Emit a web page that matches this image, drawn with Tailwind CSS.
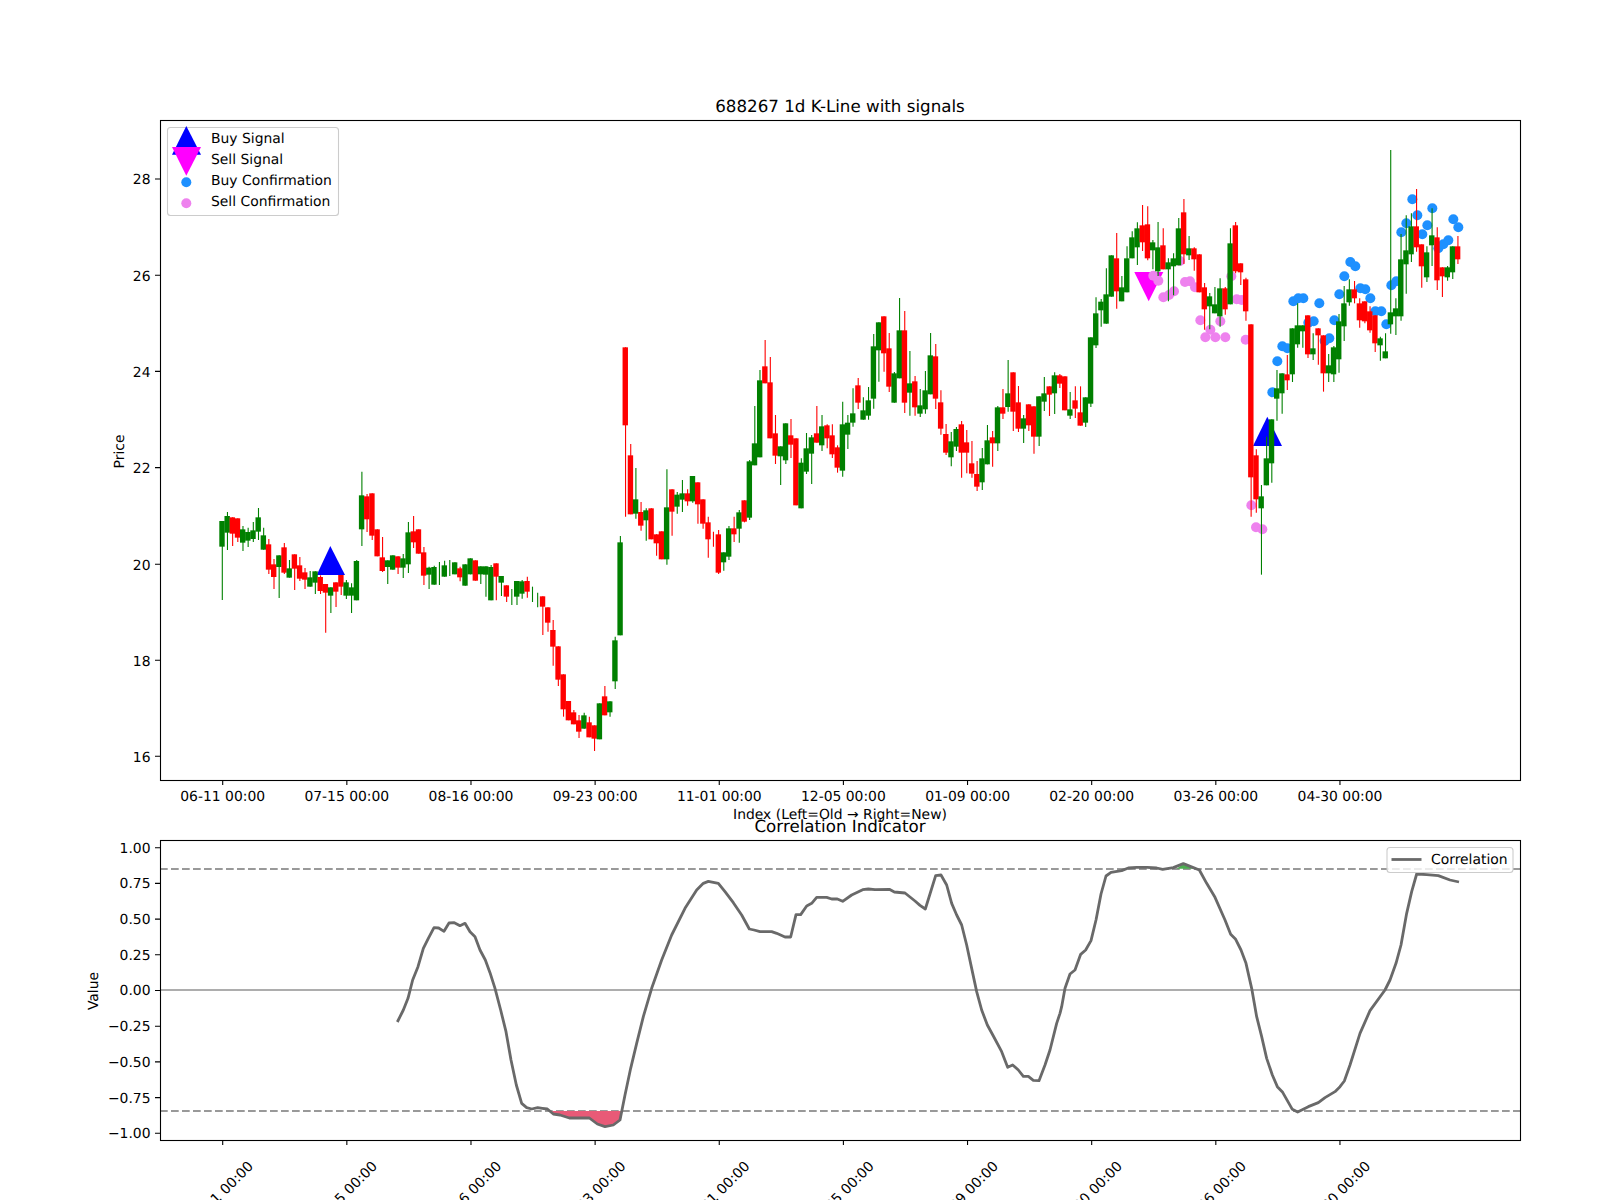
<!DOCTYPE html>
<html>
<head>
    <title>688267 1d K-Line with signals</title>
    <script src="https://cdn.jsdelivr.net/npm/@tailwindcss/browser@4"></script>
</head>
<body class="bg-white m-0 p-0">
    <div class="w-[1600px] h-[1200px] overflow-hidden bg-white">
        <svg id="chart" width="1600" height="1200" viewBox="0 0 1600 1200" class="block font-['DejaVu_Sans',sans-serif] text-[13.9px] fill-black [text-rendering:geometricPrecision]">

            <!-- Price panel -->
            <g id="markers"></g>
            <g id="candles"></g>
            <rect x="160.5" y="120.5" width="1360" height="660" fill="none" stroke="#000" stroke-width="1.1"></rect>
            <text x="840" y="112" text-anchor="middle" class="text-[16.7px]">688267 1d K-Line with signals</text>
            <text x="840" y="819" text-anchor="middle">Index (Left=Old → Right=New)</text>
            <text transform="translate(124 451.5) rotate(-90)" text-anchor="middle">Price</text>

            <g text-anchor="end">
                <text x="150.5" y="184">28</text>
                <text x="150.5" y="281">26</text>
                <text x="150.5" y="377">24</text>
                <text x="150.5" y="473">22</text>
                <text x="150.5" y="570">20</text>
                <text x="150.5" y="666">18</text>
                <text x="150.5" y="762">16</text>
            </g>
            <g text-anchor="middle">
                <text x="222.7" y="801">06-11 00:00</text>
                <text x="346.8" y="801">07-15 00:00</text>
                <text x="471" y="801">08-16 00:00</text>
                <text x="595.1" y="801">09-23 00:00</text>
                <text x="719.3" y="801">11-01 00:00</text>
                <text x="843.4" y="801">12-05 00:00</text>
                <text x="967.6" y="801">01-09 00:00</text>
                <text x="1091.7" y="801">02-20 00:00</text>
                <text x="1215.8" y="801">03-26 00:00</text>
                <text x="1340" y="801">04-30 00:00</text>
            </g>

            <!-- Price legend -->
            <rect x="167.5" y="127.5" width="171" height="88" rx="3" fill="#fff" fill-opacity="0.8" stroke="#ccc" stroke-width="1.1"></rect>
            <polygon points="186.3,126 201,154.7 172,154.7" fill="#0000ff"></polygon>
            <polygon points="172,147 201,147 186.3,175.7" fill="#ff00ff"></polygon>
            <circle cx="186.3" cy="182.3" r="5" fill="#1e90ff"></circle>
            <circle cx="186.3" cy="203.3" r="5" fill="#ee82ee"></circle>
            <text x="211" y="143.3">Buy Signal</text>
            <text x="211" y="164.3">Sell Signal</text>
            <text x="211" y="185.3">Buy Confirmation</text>
            <text x="211" y="206.3">Sell Confirmation</text>

            <!-- Correlation panel -->
            <line x1="160" x2="1520" y1="869" y2="869" stroke="#999999" stroke-width="2" stroke-dasharray="7.7 3.3"></line>
            <line x1="160" x2="1520" y1="1111" y2="1111" stroke="#999999" stroke-width="2" stroke-dasharray="7.7 3.3"></line>
            <line x1="160" x2="1520" y1="990" y2="990" stroke="#adadad" stroke-width="2"></line>
            <polygon id="corr-fill-low" fill="#e85a77"></polygon>
            <polygon id="corr-fill-high" fill="#4caf50"></polygon>
            <polyline id="corr-line" fill="none" stroke="#696969" stroke-width="2.8" stroke-linejoin="round"></polyline>
            <rect x="160.5" y="840.5" width="1360" height="300" fill="none" stroke="#000" stroke-width="1.1"></rect>
            <text x="840" y="832" text-anchor="middle" class="text-[16.7px]">Correlation Indicator</text>
            <text transform="translate(98 991) rotate(-90)" text-anchor="middle">Value</text>

            <g text-anchor="end">
                <text x="150.5" y="852.6">1.00</text>
                <text x="150.5" y="888.3">0.75</text>
                <text x="150.5" y="924">0.50</text>
                <text x="150.5" y="959.7">0.25</text>
                <text x="150.5" y="995.4">0.00</text>
                <text x="150.5" y="1031">−0.25</text>
                <text x="150.5" y="1066.7">−0.50</text>
                <text x="150.5" y="1103">−0.75</text>
                <text x="150.5" y="1138">−1.00</text>
            </g>
            <g text-anchor="middle">
                <text transform="translate(224 1197) rotate(-45)">06-11 00:00</text>
                <text transform="translate(348.1 1197) rotate(-45)">07-15 00:00</text>
                <text transform="translate(472.3 1197) rotate(-45)">08-16 00:00</text>
                <text transform="translate(596.4 1197) rotate(-45)">09-23 00:00</text>
                <text transform="translate(720.6 1197) rotate(-45)">11-01 00:00</text>
                <text transform="translate(844.7 1197) rotate(-45)">12-05 00:00</text>
                <text transform="translate(968.9 1197) rotate(-45)">01-09 00:00</text>
                <text transform="translate(1093 1197) rotate(-45)">02-20 00:00</text>
                <text transform="translate(1217.1 1197) rotate(-45)">03-26 00:00</text>
                <text transform="translate(1341.3 1197) rotate(-45)">04-30 00:00</text>
            </g>

            <!-- Correlation legend -->
            <rect x="1387" y="847.5" width="126" height="25" rx="3" fill="#fff" fill-opacity="0.8" stroke="#ccc" stroke-width="1.1"></rect>
            <line x1="1391.5" x2="1421.5" y1="859.5" y2="859.5" stroke="#696969" stroke-width="2.8"></line>
            <text x="1431" y="864.3">Correlation</text>

            <path id="ticks" fill="none" stroke="#000" stroke-width="1.1"></path>
        </svg>
    </div>

    <script>
        const NS = 'http://www.w3.org/2000/svg';
        const G = '#008000', R = '#ff0000';
        const X0 = 222, STEP = 5.17;

        function add(parent, tag, attrs) {
            const el = document.createElementNS(NS, tag);
            for (const k in attrs) el.setAttribute(k, attrs[k]);
            parent.appendChild(el);
            return el;
        }

        // Candles read off 3x crops: colour, body top, body bottom, wick top, wick bottom.
        // Each block keeps the y origin of its crop. Null body = wick only.
        const blocks = [
            [420, [
                [G,303,380,303,540],[G,288,338,276,390],[R,292,341,292,378],[R,295,353,295,366],[G,328,368,318,393],
                [G,336,362,323,381],[G,331,357,306,366],[G,292,335,264,360],[G,346,389,323,389],[R,373,449,357,462],
                [R,433,471,417,507],[G,406,441,406,534],[R,382,458,369,462],[G,445,473,420,473],[R,403,446,403,510],
                [R,436,476,411,483],[R,457,479,444,507],[G,472,500,453,500],[G,454,488,454,522],[R,471,513,466,522],
                [R,492,518,492,638],[G,502,527,502,579],[R,487,515,487,561],[R,465,500,465,525],[G,487,527,480,537],
                [G,502,527,490,579],[G,423,541,420,541],[G,226,328,155,378],[R,229,298,222,336],[R,220,347,220,360],
                [R,328,409,328,409],[R,412,453,351,456],[G,421,441,421,492],[G,406,449,406,449],[R,409,443,409,462],
                [G,415,443,402,474],[G,337,433,306,459],[R,334,367,288,384],[R,328,401,328,401],[R,397,467,381,495],
                [G,443,464,440,507],[G,441,494,437,494],[G,null,null,426,495],[G,436,470,422,470],[G,null,null,420,468],
                [G,427,463,427,463],[R,445,472,440,484],[G,433,497,433,497],[G,415,463,415,463],[R,421,482,421,482],
                [G,439,463,439,492],[G,439,464,439,530],[G,441,541,435,541],[R,430,470,430,541]
            ]],
            [320, [
                [G,768,788,768,828],[R,796,830,796,846],[G,null,null,807,855],[G,783,830,783,855],[G,784,821,780,836],
                [R,783,815,770,833],[G,null,null,800,846],[G,null,null,818,862],[R,829,860,829,945],[R,862,908,862,935],
                [R,930,980,900,1037],[R,979,1079,979,1098],[R,1063,1168,1063,1190],[R,1143,1201,1143,1201],[R,1177,1213,1170,1213],
                [R,1201,1235,1185,1254],[G,1186,1226,1178,1226],[R,1207,1252,1190,1252],[R,1216,1256,1216,1293],[G,1150,1258,1150,1258],
                [R,1129,1186,1098,1186],[G,1144,1177,1144,1190],[G,961,1084,950,1107],[G,667,946,648,946],[R,82,316,82,590],
                [R,406,583,372,583],[G,538,581,444,596],[R,576,617,546,632],[G,571,601,565,662],[R,565,658,565,658],
                [R,643,670,643,707],[R,634,718,634,718],[G,562,718,448,734],[R,508,575,508,647],[G,524,560,516,581],
                [G,520,539,480,576],[R,520,544,508,557],[G,468,544,468,548],[R,487,553,487,611],[R,538,611,538,626],
                [R,607,658,590,713],[R,null,null,635,680],[R,643,758,630,762],[G,697,727,697,752],[G,625,710,618,720],
                [R,625,643,590,666],[G,577,626,570,668],[R,541,605,541,607],[G,424,593,420,600],[G,370,436,258,436],
                [G,181,412,150,412],[R,139,190,60,190],[R,187,355,111,355],[R,340,407,285,432],[G,379,409,379,495],
                [G,310,421,310,432],[R,346,374,297,414],[R,355,556,355,556],[G,428,565,415,565],[G,385,455,339,462],
                [G,352,401,345,492],[R,340,368,258,368],[G,319,376,285,393],[R,316,355,313,385],[R,346,403,313,414],
                [R,382,443,376,458],[G,313,452,245,470],[G,308,344,285,387]
            ]],
            [270, [
                [G,430,458,355,470],[R,346,398,324,417],[G,421,449,382,449],[G,391,437,351,449],[G,229,386,192,416],
                [G,157,241,157,335],[R,139,250,139,305],[R,235,350,189,366],[G,310,398,306,398],[G,181,325,84,325],
                [R,181,398,123,429],[G,340,368,243,437],[R,334,412,318,437],[G,406,431,357,441],[G,361,418,303,431],
                [G,256,373,189,373],[R,259,386,222,417],[R,397,476,361,494],[R,492,548,462,555],[G,514,562,486,589],
                [G,477,530,471,543],[R,463,548,453,623],[R,517,548,480,610],[R,580,611,513,623],[R,612,650,573,663],
                [G,565,637,534,660],[G,511,583,465,583],[R,502,520,483,590],[G,412,520,408,543],[R,412,431,357,447],
                [G,370,411,270,425],[R,307,425,307,483],[R,397,476,348,486],[G,445,476,435,519],[R,403,466,403,483],
                [R,409,500,409,551],[G,379,500,379,528],[G,370,395,321,423],[R,349,374,349,438],[G,316,370,307,432],
                [R,316,341,312,354],[R,319,421,319,421],[G,418,437,366,447],[R,391,416,349,444],[R,427,467,349,467],
                [G,382,458,382,471],[G,202,401,202,411],[G,130,226,82,234]
            ]],
            [180, [
                [G,365,391,357,440],[G,343,431,265,431],[G,226,350,226,350],[R,235,334,159,386],[G,322,364,288,364],
                [G,235,337,199,337],[G,172,235,154,235],[G,145,202,127,255],[R,136,187,75,213],[R,133,235,79,241],
                [G,187,211,180,268],[G,202,274,126,288],[R,196,268,145,268],[G,247,268,235,364],[G,235,259,220,346],
                [G,145,256,114,256],[R,97,223,57,252],[G,205,226,168,240],[R,205,238,202,272],[R,223,337,223,337],
                [R,322,388,309,449],[G,349,379,339,448],[G,373,400,321,400],[G,325,409,295,440],[R,325,388,321,404],
                [G,190,373,145,373],[R,136,274,126,280],[R,250,277,250,315],[R,298,394,293,422]
            ]],
            [140, [
                [R,553,1012,553,1130],[R,946,1078,928,1118],[G,1069,1105,1035,1304],[G,955,1036,890,1036],[G,838,970,838,1028],
                [G,745,776,690,842],[G,700,760,700,821],[R,703,721,645,750],[G,565,703,565,726],[G,556,613,490,623],
                [G,556,574,556,623],[R,526,643,526,654],[G,625,643,580,660],[R,565,586,565,674],[R,586,700,586,755],
                [G,676,700,642,726],[G,622,703,618,726],[G,544,658,522,698],[G,490,559,438,603],[G,448,487,418,497],
                [R,448,475,423,490],[R,490,541,475,563],[R,484,544,484,550],[R,514,571,499,578],[R,526,610,526,636],
                [G,595,616,590,662],[G,634,655,580,655],[G,517,553,30,581],[G,505,529,475,585],[G,358,529,282,542],
                [G,331,373,226,461],[G,259,343,220,366],[R,259,322,147,335],[R,313,379,313,443],[G,337,412,319,426],
                [G,286,316,205,378],[R,292,421,262,450],[R,382,409,382,471],[G,382,412,378,422],[G,319,397,319,417],
                [R,319,358,288,372]
            ]]
        ];

        const candleLayer = document.getElementById('candles');
        let idx = 0;
        blocks.forEach(([offset, rows]) => {
            rows.forEach(([color, bodyTop, bodyBottom, wickTop, wickBottom]) => {
                const x = X0 + STEP * idx;
                add(candleLayer, 'line', {
                    x1: x + 0.3, x2: x + 0.3,
                    y1: offset + wickTop / 3, y2: offset + wickBottom / 3,
                    stroke: color, 'stroke-width': 1.1
                });
                if (bodyTop !== null) {
                    add(candleLayer, 'rect', {
                        x: x - 2.7, width: 5.4,
                        y: offset + bodyTop / 3, height: (bodyBottom - bodyTop) / 3,
                        fill: color
                    });
                }
                idx++;
            });
        });

        // Signal triangles go under the confirmation dots, both under the candles
        const markers = document.getElementById('markers');
        add(markers, 'polygon', { points: '330.3,546 345,575 316.7,575', fill: '#0000ff' });
        add(markers, 'polygon', { points: '1267.3,416.7 1282,446 1253,446', fill: '#0000ff' });
        add(markers, 'polygon', { points: '1134.3,272 1163.3,272 1148.7,301.3', fill: '#ff00ff' });

        const sellDots = [[160,287],[175,302],[190,352],[207,345],[222,334],[240,243],[255,306],[270,304],[285,322],
            [301,421],[331,449],[361,424],[316,472],[346,472],[376,472],[394,289],[410,358],[425,360],[437,479]];
        sellDots.forEach(([x, y]) => add(markers, 'circle', { cx: 1100 + x / 3, cy: 180 + y / 3, r: 5, fill: '#ee82ee' }));
        [[94,1096],[108,1162],[127,1168]].forEach(([x, y]) =>
            add(markers, 'circle', { cx: 1220 + x / 3, cy: 140 + y / 3, r: 5, fill: '#ee82ee' }));

        const buyDots = [[157,757],[172,664],[187,619],[202,625],[220,484],[235,475],[250,475],[298,490],[265,548],[281,544],
            [314,603],[328,595],[343,541],[358,463],[373,409],[391,366],[406,379],[421,445],[436,448],[451,475],[466,514],
            [484,514],[499,553],[514,436],[529,424],[544,277],[559,250],[577,178],[592,226],[607,283],[622,256],[637,205],
            [655,325],[670,313],[685,301],[700,238],[715,262]];
        buyDots.forEach(([x, y]) => add(markers, 'circle', { cx: 1220 + x / 3, cy: 140 + y / 3, r: 5, fill: '#1e90ff' }));

        // Correlation curve, also read off three crops
        const scale = (ox, oy, pts) => pts.map(([x, y]) => [ox + x / 3, oy + y / 3]);
        const left = scale(60, 780, [[1012,726],[1030,690],[1044,655],[1058,600],[1074,560],[1090,505],[1105,475],[1122,443],
            [1136,444],[1152,454],[1167,429],[1183,428],[1200,437],[1215,430],[1230,455],[1245,470],[1260,510],[1276,540],
            [1290,578],[1305,625],[1322,690],[1338,755],[1353,840],[1369,915],[1385,970],[1400,983],[1415,987],[1433,983],
            [1447,985],[1462,987],[1480,1002]]);
        const lowDip = scale(560, 820, [[0,885],[28,894],[60,894],[88,894],[112,912],[135,920],[160,915],[180,900]]);
        const middle = scale(560, 820, [[195,825],[212,745],[230,670],[250,590],[275,505],[305,420],[335,345],[375,265],
            [410,210],[430,190],[445,184],[475,190],[495,215],[520,248],[545,285],[568,327],[582,330],[600,335],[635,335],
            [650,340],[675,351],[692,351],[708,284],[722,284],[740,258],[755,250],[770,232],[800,232],[815,237],[832,237],
            [848,244],[875,225],[908,209],[925,207],[945,209],[988,208],[1003,216],[1035,219],[1065,243],[1080,256],[1096,267],
            [1127,167],[1143,165],[1160,195],[1175,250],[1190,285],[1205,315],[1220,375],[1235,445],[1250,515],[1265,570],
            [1282,615],[1300,648],[1325,695],[1343,742],[1358,735],[1375,750],[1390,769],[1405,769],[1420,781],[1437,782],
            [1455,735],[1470,690],[1490,610]]);
        const right = scale(1060, 820, [[0,580],[5,560],[15,505],[30,462],[45,450],[62,403],[77,390],[93,362],[108,300],[123,222],
            [138,168],[153,157],[185,152],[205,144],[230,142],[262,142],[290,144],[308,148],[340,143],[370,131],[400,143],
            [418,150],[440,190],[465,232],[495,300],[512,343],[527,358],[543,390],[558,430],[575,505],[590,590],[605,650],
            [620,715],[637,765],[652,800],[668,817],[697,868],[713,876],[745,860],[775,848],[795,833],[825,815],[840,800],
            [853,783],[870,735],[900,640],[930,572],[975,510],[990,480],[1008,430],[1023,375],[1040,280],[1055,215],[1070,162],
            [1100,164],[1135,167],[1170,180],[1197,186]]);

        const toPoints = pts => pts.map(p => p.join(',')).join(' ');
        document.getElementById('corr-line').setAttribute('points', toPoints([...left, ...lowDip, ...middle, ...right]));
        document.getElementById('corr-fill-low').setAttribute('points',
            toPoints([[552, 1111], ...left.slice(-1), ...lowDip, [621, 1111]]));
        document.getElementById('corr-fill-high').setAttribute('points',
            toPoints(scale(1060, 820, [[350,146],[370,131],[400,143],[408,146]])));

        // Axis ticks
        let d = '';
        for (let i = 0; i < 10; i++) {
            const x = 222.7 + 124.14 * i;
            d += `M${x} 780V785M${x} 1140V1145`;
        }
        [179, 275.2, 371.4, 467.6, 564.3, 660.3, 756.3].forEach(y => { d += `M155 ${y}H160`; });
        for (let i = 0; i < 9; i++) {
            d += `M155 ${847.7 + 35.7 * i}H160`;
        }
        document.getElementById('ticks').setAttribute('d', d);
    </script>
</body>
</html>
